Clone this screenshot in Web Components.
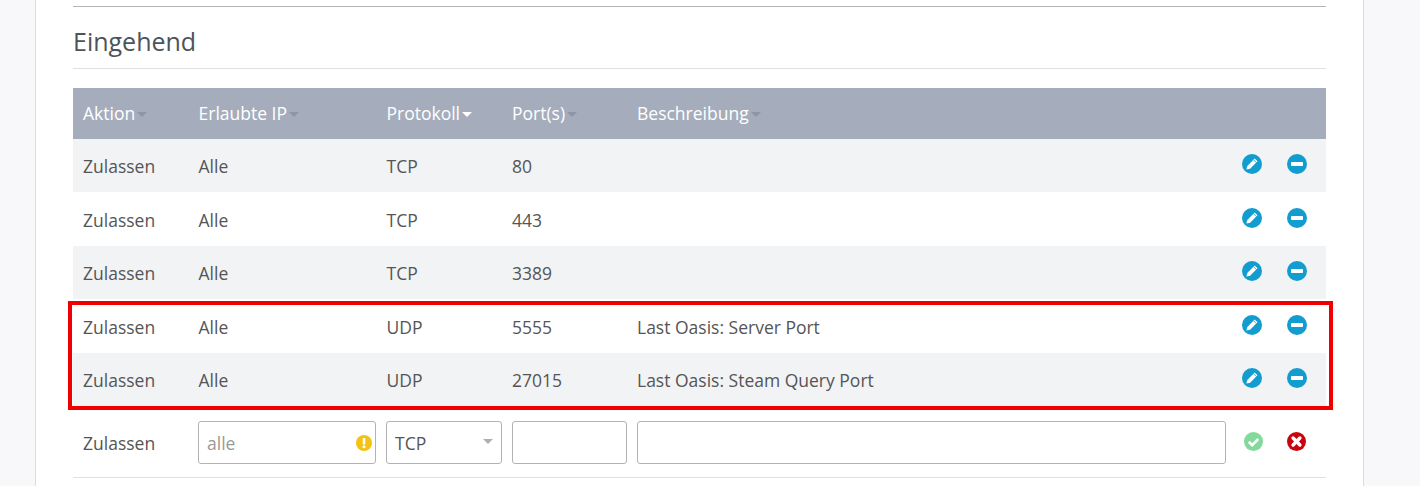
<!DOCTYPE html>
<html lang="de">
<head>
<meta charset="utf-8">
<title>Firewall</title>
<style>
	html, body { margin: 0; height: 486px; overflow: hidden; background: #f8f8fa; }
	body { font: 17.5px 'Open Sans', sans-serif; color: #555; }
</style>
</head>
<body>
<fw-page>
	<fw-section title="Eingehend">
		<fw-head-row></fw-head-row>
		<fw-row h="53" shade action="Zulassen" ip="Alle" proto="TCP" port="80"></fw-row>
		<fw-row h="54" action="Zulassen" ip="Alle" proto="TCP" port="443"></fw-row>
		<fw-row h="53" shade action="Zulassen" ip="Alle" proto="TCP" port="3389"></fw-row>
		<fw-row h="54" action="Zulassen" ip="Alle" proto="UDP" port="5555" desc="Last Oasis: Server Port"></fw-row>
		<fw-row h="53" shade action="Zulassen" ip="Alle" proto="UDP" port="27015" desc="Last Oasis: Steam Query Port"></fw-row>
		<fw-new-row></fw-new-row>
		<fw-mark slot="over"></fw-mark>
	</fw-section>
</fw-page>

<script>
'use strict';

const COLUMNS = 'grid-template-columns: 115.5px 188px 125.5px 125px 1fr 90px;';

const ICONS = {
	edit: `<circle cx="10" cy="10" r="10" fill="#129ccf"/>
		<path d="M4.4 15.6l.9-3.7 7.4-7.4 2.8 2.8-7.4 7.4z" fill="#fff"/>
		<path d="M11.5 5.7l2.8 2.8" stroke="#129ccf" stroke-width=".8"/>`,
	minus: `<circle cx="10" cy="10" r="10" fill="#129ccf"/>
		<rect x="4" y="8" width="12" height="4" rx=".8" fill="#fff"/>`,
	ok: `<circle cx="10" cy="10" r="10" fill="#82d99b"/>
		<path d="M5 10.2l3.6 3.6 6.4-6.4" fill="none" stroke="#fff" stroke-width="2.8"/>`,
	cancel: `<circle cx="10" cy="10" r="10" fill="#c8050f"/>
		<path d="M6.4 6.4l7.2 7.2M13.6 6.4l-7.2 7.2" fill="none" stroke="#fff" stroke-width="3.6" stroke-linecap="round"/>`,
	warn: `<circle cx="10" cy="10" r="10" fill="#f3c313"/>
		<rect x="8.4" y="3.6" width="3.2" height="8.4" rx="1.2" fill="#fff"/>
		<circle cx="10" cy="14.7" r="1.9" fill="#fff"/>`
};

class FwIcon extends HTMLElement {
	connectedCallback() {
		let size = this.getAttribute('size') || 20;
		this.attachShadow({ mode: 'open' }).innerHTML = `
			<style>
				:host { display: block; line-height: 0; }
			</style>
			<svg width="${size}" height="${size}" viewBox="0 0 20 20">${ICONS[this.getAttribute('name')]}</svg>`;
	}
}

class FwPage extends HTMLElement {
	constructor() {
		super();
		this.attachShadow({ mode: 'open' }).innerHTML = `
			<style>
				:host {
					display: block;
					box-sizing: border-box;
					width: 1329px;
					height: 486px;
					margin-left: 35px;
					padding: 6px 37px 0;
					background: #fff;
					border-left: 1px solid #dcdcdf;
					border-right: 1px solid #dcdcdf;
				}
			</style>
			<slot></slot>`;
	}
}

class FwSection extends HTMLElement {
	constructor() {
		super();
		this.attachShadow({ mode: 'open' }).innerHTML = `
			<style>
				:host { display: block; position: relative; border-top: 1px solid #b4b4b8; }
				h2 {
					margin: 0 0 19px;
					height: 62px;
					box-sizing: border-box;
					border-bottom: 1px solid #e0e0e3;
					font: 400 25px/68px 'Open Sans', sans-serif;
					color: #4c5359;
				}
			</style>
			<h2 id="t"></h2>
			<slot></slot>
			<slot name="over"></slot>`;
		this.shadowRoot.getElementById('t').textContent = this.getAttribute('title');
		this.removeAttribute('title');
	}
}

class FwHeadRow extends HTMLElement {
	constructor() {
		super();
		let cols = [['Aktion', 0], ['Erlaubte IP', 0], ['Protokoll', 1], ['Port(s)', 0], ['Beschreibung', 0]];
		this.attachShadow({ mode: 'open' }).innerHTML = `
			<style>
				:host {
					display: grid;
					${COLUMNS}
					align-items: center;
					height: 51px;
					box-sizing: border-box;
					padding: 0 0 2px 10px;
					background: #a5adbc;
					color: #fff;
				}
				i {
					display: inline-block;
					width: 0;
					height: 0;
					margin-left: 2px;
					vertical-align: 3px;
					border: 5px solid transparent;
					border-bottom: 0;
					border-top-color: #8e96a5;
				}
				i.on { border-top-color: #fff; }
			</style>
			${cols.map(([t, on]) => `<div>${t}<i class="${on ? 'on' : ''}"></i></div>`).join('')}`;
	}
}

class FwRow extends HTMLElement {
	connectedCallback() {
		let a = (n) => this.getAttribute(n) || '';
		this.attachShadow({ mode: 'open' }).innerHTML = `
			<style>
				:host {
					display: grid;
					${COLUMNS}
					align-items: center;
					height: ${a('h')}px;
					padding-left: 10px;
					background: ${this.hasAttribute('shade') ? '#f2f3f5' : '#fff'};
				}
				.t { padding-top: ${a('h') == 54 ? 2 : 0}px; }
				.acts { display: flex; gap: 25px; margin-left: 6px; margin-top: -3px; }
			</style>
			<div class="t">${a('action')}</div>
			<div class="t">${a('ip')}</div>
			<div class="t">${a('proto')}</div>
			<div class="t">${a('port')}</div>
			<div class="t">${a('desc')}</div>
			<div class="acts"><fw-icon name="edit"></fw-icon><fw-icon name="minus"></fw-icon></div>`;
	}
}

class FwNewRow extends HTMLElement {
	constructor() {
		super();
		this.attachShadow({ mode: 'open' }).innerHTML = `
			<style>
				:host {
					display: grid;
					grid-template-columns: 115px 188px 126px 125px 1fr 90px;
					align-items: center;
					height: 72px;
					box-sizing: border-box;
					padding: 2px 0 0 10px;
					border-bottom: 1px solid #dfe0e3;
				}
				.f {
					display: flex;
					align-items: center;
					box-sizing: border-box;
					height: 43px;
					margin-right: 10px;
					padding: 0 8px;
					background: #fff;
					border: 1px solid #b3b3b6;
					border-radius: 3px;
				}
				.hint { color: #999; }
				.f fw-icon { margin-left: auto; margin-right: -5px; }
				.caret {
					margin-left: auto;
					margin-right: 0;
					margin-top: -2px;
					width: 0;
					height: 0;
					border: 5px solid transparent;
					border-bottom: 0;
					border-top-color: #b0b0b4;
				}
				.acts { display: flex; gap: 24px; margin: -3px 0 0 8px; align-items: center; }
			</style>
			<div>Zulassen</div>
			<div class="f"><span class="hint">alle</span><fw-icon name="warn" size="16"></fw-icon></div>
			<div class="f">TCP<span class="caret"></span></div>
			<div class="f"></div>
			<div class="f"></div>
			<div class="acts"><fw-icon name="ok" size="19"></fw-icon><fw-icon name="cancel" size="19"></fw-icon></div>`;
	}
}

// red annotation drawn on top of the two highlighted rows
class FwMark extends HTMLElement {
	constructor() {
		super();
		this.attachShadow({ mode: 'open' }).innerHTML = `
			<style>
				:host {
					position: absolute;
					left: -5px;
					top: 294px;
					width: 1265px;
					height: 109px;
					box-sizing: border-box;
					border: 4px solid #f00000;
				}
			</style>`;
	}
}

customElements.define('fw-icon', FwIcon);
customElements.define('fw-page', FwPage);
customElements.define('fw-section', FwSection);
customElements.define('fw-head-row', FwHeadRow);
customElements.define('fw-row', FwRow);
customElements.define('fw-new-row', FwNewRow);
customElements.define('fw-mark', FwMark);
</script>
</body>
</html>
